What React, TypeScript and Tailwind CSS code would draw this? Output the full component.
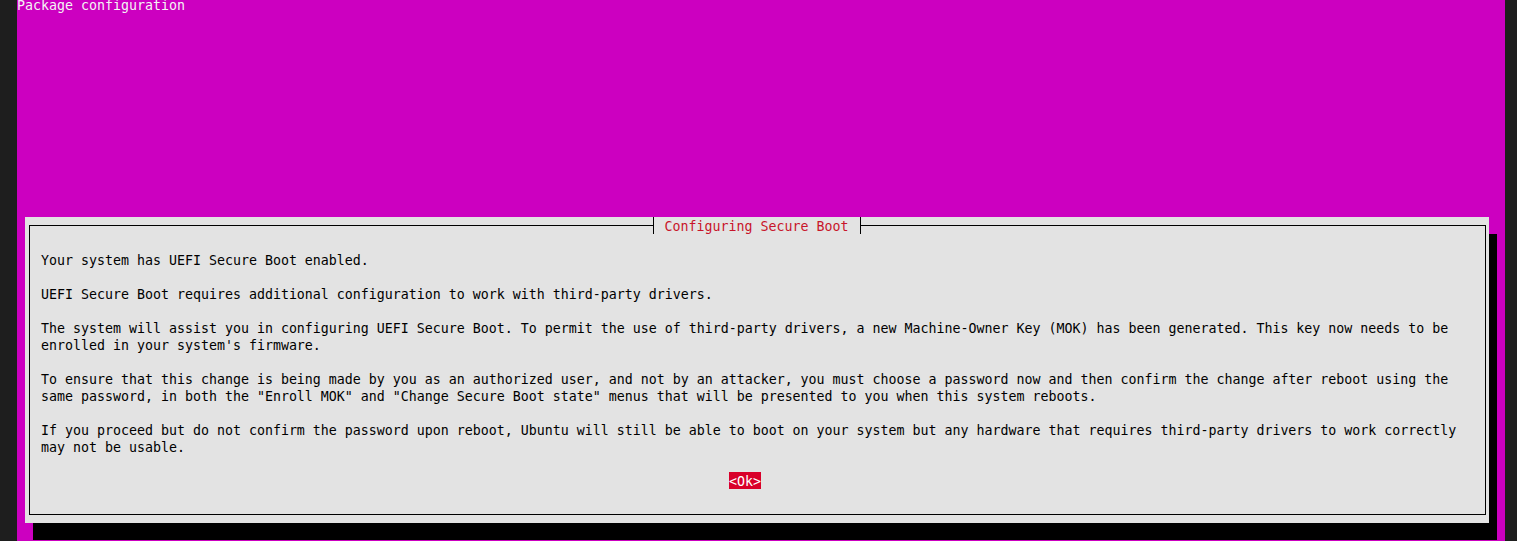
export default function App() {
  const lines = [
    "Your system has UEFI Secure Boot enabled.",
    "",
    "UEFI Secure Boot requires additional configuration to work with third-party drivers.",
    "",
    "The system will assist you in configuring UEFI Secure Boot. To permit the use of third-party drivers, a new Machine-Owner Key (MOK) has been generated. This key now needs to be",
    "enrolled in your system's firmware.",
    "",
    "To ensure that this change is being made by you as an authorized user, and not by an attacker, you must choose a password now and then confirm the change after reboot using the",
    'same password, in both the "Enroll MOK" and "Change Secure Boot state" menus that will be presented to you when this system reboots.',
    "",
    "If you proceed but do not confirm the password upon reboot, Ubuntu will still be able to boot on your system but any hardware that requires third-party drivers to work correctly",
    "may not be usable.",
    "",
  ];

  return (
    <div className="flex h-[541px] w-[1517px] overflow-hidden bg-[#1e1e1e] font-['DejaVu_Sans_Mono',monospace] text-[13.29px] leading-[17px]">
      <div className="w-[17px] shrink-0" />
      <div className="flex w-[1488px] shrink-0 flex-col bg-[#cc00c0]">
        <div className="-mt-[4px] h-[17px] whitespace-pre pt-[1px] text-[#f4f4f4]">Package configuration</div>
        <div className="h-[204px] shrink-0" />
        <div className="relative ml-[8px] h-[306px] w-[1464px] shrink-0 bg-[#e3e3e3] shadow-[8px_17px_0_0_#000]">
          <div className="ml-[4px] mt-[8px] h-[290px] w-[1457px] border border-black pl-[11px] pt-[25px] text-black">
            {lines.map((l, i) => (
              <div key={i} className="h-[17px] whitespace-pre pt-[1px]">{l}</div>
            ))}
            <div className="flex h-[17px] pl-[688px]">
              <span className="h-[17px] whitespace-pre bg-[#d9002a] pt-[1px] text-white">&lt;Ok&gt;</span>
            </div>
          </div>
          <div className="absolute inset-x-0 top-0 flex justify-center">
            <div className="h-[17px] whitespace-pre border-x border-black bg-[#e3e3e3] pl-[11px] pr-[12px] pt-[1px] text-[#c8142a]">
              Configuring Secure Boot
            </div>
          </div>
        </div>
      </div>
      <div className="w-[12px] shrink-0" />
    </div>
  );
}
